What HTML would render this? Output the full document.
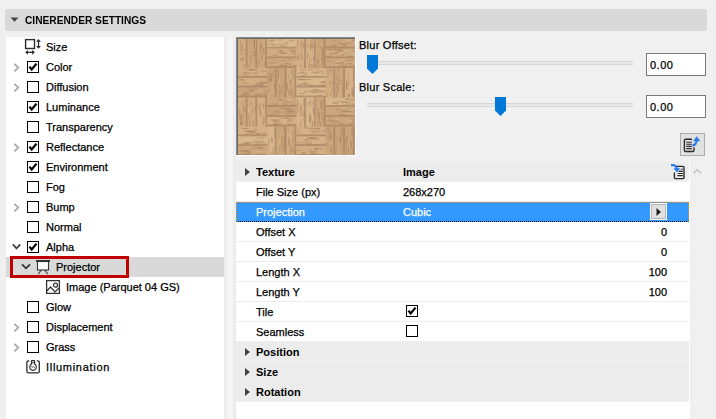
<!DOCTYPE html>
<html><head><meta charset="utf-8">
<style>
*{margin:0;padding:0;box-sizing:border-box}
html,body{width:716px;height:419px;overflow:hidden;background:#f0f0f0;font-family:"Liberation Sans",sans-serif;font-size:11px;color:#000;-webkit-text-stroke:0.25px currentColor}
.a{position:absolute}
#hdr{left:5px;top:9px;width:702px;height:22px;background:#d9d9d9;border-radius:3px}
#hdr .t{left:20px;top:0;line-height:22px;font-weight:bold;font-size:11px;letter-spacing:0;color:#000;-webkit-text-stroke:0;transform:scaleX(0.925);transform-origin:0 0}
#left{left:6px;top:37px;width:218px;height:382px;background:#fff}
.row{position:absolute;left:0;width:218px;height:20px;line-height:20px;white-space:nowrap}
.row .lbl{position:absolute;left:40px;top:0}
.cb{position:absolute;width:12px;height:12px;border:1px solid #000;background:#fff}
.chev{position:absolute}
#split1{left:224px;top:37px;width:12px;height:382px;background:#ececec}
#split2{left:227px;top:37px;width:6px;height:382px;background:#f5f5f5}
#tex{left:236px;top:37px;width:120px;height:119px}
.lab{white-space:nowrap;line-height:14px;letter-spacing:0.25px}
.track{height:4px;background:#e7eaea;border-top:1px solid #d6d6d6;border-bottom:1px solid #d6d6d6}
.inp{width:60px;height:23px;border:1px solid #7a7a7a;background:#fff;line-height:23px;padding-left:3px;letter-spacing:0.5px}
#table{left:236px;top:162px;width:454px;height:257px;background:#fff}
.tr{position:absolute;left:0;width:453px;height:20px;line-height:20px;border-bottom:1px solid #ededed;white-space:nowrap}
.tr.h{background:#ececec;font-weight:bold;-webkit-text-stroke:0;border-bottom:1px solid #f0f0f0}
.tr .c1{position:absolute;left:20px;top:0}
.tr .c2{position:absolute;left:167px;top:0}
.tr .num{position:absolute;right:22px;top:0}
.tri{position:absolute;left:9px;top:6px;width:0;height:0;border-left:5px solid #444;border-top:4px solid transparent;border-bottom:4px solid transparent}
</style></head><body>

<div id="hdr" class="a">
  <svg class="a" style="left:5px;top:8px" width="9" height="6"><path d="M0.5 0.5 H8.5 L4.5 4.8 Z" fill="#444"/></svg>
  <div class="a t">CINERENDER SETTINGS</div>
</div>

<div id="left" class="a">
  <!-- row 0 Size -->
  <div class="row" style="top:0">
    <svg class="a" style="left:18px;top:1px" width="18" height="18">
      <rect x="1.6" y="1.6" width="8.9" height="8.9" fill="none" stroke="#2b2b2b" stroke-width="1.4"/>
      <path d="M14.5 2.5 V9.2" stroke="#2b2b2b" stroke-width="1.3"/><path d="M12.1 3.7 L14.5 0.9 L16.9 3.7 Z M12.1 7.9 L14.5 10.7 L16.9 7.9 Z" fill="#2b2b2b"/>
      <path d="M2.5 14.3 H9.5" stroke="#2b2b2b" stroke-width="1.3"/><path d="M3.9 11.9 L1.1 14.3 L3.9 16.7 Z M8.1 11.9 L10.9 14.3 L8.1 16.7 Z" fill="#2b2b2b"/>
    </svg>
    <span class="lbl">Size</span>
  </div>
  <div class="row" style="top:20px"><svg class="chev" style="left:7px;top:6px" width="8" height="10"><path d="M1.4 0.8 L5.3 4.6 L1.4 8.4" fill="none" stroke="#a8a8a8" stroke-width="1.8"/></svg><div class="cb" style="left:21px;top:4px"></div><svg class="a" style="left:21px;top:4px" width="13" height="13"><path d="M2.5 5.6 L4.7 8.5 L9.5 2.6" fill="none" stroke="#000" stroke-width="2.2"/></svg><span class="lbl">Color</span></div>
  <div class="row" style="top:40px"><svg class="chev" style="left:7px;top:6px" width="8" height="10"><path d="M1.4 0.8 L5.3 4.6 L1.4 8.4" fill="none" stroke="#a8a8a8" stroke-width="1.8"/></svg><div class="cb" style="left:21px;top:4px"></div><span class="lbl">Diffusion</span></div>
  <div class="row" style="top:60px"><div class="cb" style="left:21px;top:4px"></div><svg class="a" style="left:21px;top:4px" width="13" height="13"><path d="M2.5 5.6 L4.7 8.5 L9.5 2.6" fill="none" stroke="#000" stroke-width="2.2"/></svg><span class="lbl">Luminance</span></div>
  <div class="row" style="top:80px"><div class="cb" style="left:21px;top:4px"></div><span class="lbl">Transparency</span></div>
  <div class="row" style="top:100px"><svg class="chev" style="left:7px;top:6px" width="8" height="10"><path d="M1.4 0.8 L5.3 4.6 L1.4 8.4" fill="none" stroke="#a8a8a8" stroke-width="1.8"/></svg><div class="cb" style="left:21px;top:4px"></div><svg class="a" style="left:21px;top:4px" width="13" height="13"><path d="M2.5 5.6 L4.7 8.5 L9.5 2.6" fill="none" stroke="#000" stroke-width="2.2"/></svg><span class="lbl">Reflectance</span></div>
  <div class="row" style="top:120px"><div class="cb" style="left:21px;top:4px"></div><svg class="a" style="left:21px;top:4px" width="13" height="13"><path d="M2.5 5.6 L4.7 8.5 L9.5 2.6" fill="none" stroke="#000" stroke-width="2.2"/></svg><span class="lbl">Environment</span></div>
  <div class="row" style="top:140px"><div class="cb" style="left:21px;top:4px"></div><span class="lbl">Fog</span></div>
  <div class="row" style="top:160px"><svg class="chev" style="left:7px;top:6px" width="8" height="10"><path d="M1.4 0.8 L5.3 4.6 L1.4 8.4" fill="none" stroke="#a8a8a8" stroke-width="1.8"/></svg><div class="cb" style="left:21px;top:4px"></div><span class="lbl">Bump</span></div>
  <div class="row" style="top:180px"><div class="cb" style="left:21px;top:4px"></div><span class="lbl">Normal</span></div>
  <div class="row" style="top:200px"><svg class="chev" style="left:6px;top:6px" width="10" height="8"><path d="M0.8 1.3 L4.5 5.3 L8.2 1.3" fill="none" stroke="#444" stroke-width="1.8"/></svg><div class="cb" style="left:21px;top:4px"></div><svg class="a" style="left:21px;top:4px" width="13" height="13"><path d="M2.5 5.6 L4.7 8.5 L9.5 2.6" fill="none" stroke="#000" stroke-width="2.2"/></svg><span class="lbl">Alpha</span></div>
  <!-- Projector selected -->
  <div class="row" style="top:220px;background:#d9d9d9">
    <div class="a" style="left:4px;top:-1px;width:119px;height:22px;border:3px solid #c00000"></div>
    <svg class="chev" style="left:15px;top:6px" width="11" height="8"><path d="M1 1.3 L5 5.3 L9 1.3" fill="none" stroke="#333" stroke-width="1.8"/></svg>
    <svg class="a" style="left:29px;top:2px" width="16" height="16">
      <rect x="2.5" y="2.5" width="11" height="8.5" fill="#fff" stroke="#333" stroke-width="1.1"/>
      <path d="M1 2 H15" stroke="#333" stroke-width="2"/>
      <path d="M6.3 11 L3.3 15 M9.7 11 L12.7 15" stroke="#333" stroke-width="1.1"/>
    </svg>
    <span class="lbl" style="left:50px">Projector</span>
  </div>
  <div class="row" style="top:240px">
    <svg class="a" style="left:39px;top:2px" width="16" height="16">
      <rect x="1.6" y="1.6" width="12.8" height="12.8" fill="none" stroke="#333" stroke-width="1.3"/>
      <circle cx="10.5" cy="6.2" r="2" fill="none" stroke="#333" stroke-width="1.2"/>
      <path d="M1.8 12 L5.5 8 L10 13 L14 9" fill="none" stroke="#333" stroke-width="1.2"/>
    </svg>
    <span class="lbl" style="left:60px">Image (Parquet 04 GS)</span>
  </div>
  <div class="row" style="top:260px"><div class="cb" style="left:21px;top:4px"></div><span class="lbl">Glow</span></div>
  <div class="row" style="top:280px"><svg class="chev" style="left:7px;top:6px" width="8" height="10"><path d="M1.4 0.8 L5.3 4.6 L1.4 8.4" fill="none" stroke="#a8a8a8" stroke-width="1.8"/></svg><div class="cb" style="left:21px;top:4px"></div><span class="lbl">Displacement</span></div>
  <div class="row" style="top:300px"><svg class="chev" style="left:7px;top:6px" width="8" height="10"><path d="M1.4 0.8 L5.3 4.6 L1.4 8.4" fill="none" stroke="#a8a8a8" stroke-width="1.8"/></svg><div class="cb" style="left:21px;top:4px"></div><span class="lbl">Grass</span></div>
  <div class="row" style="top:320px">
    <svg class="a" style="left:19px;top:2px" width="16" height="16">
      <path d="M4.3 1.9 H3.4 Q1.9 1.9 1.9 3.4 V12.4 Q1.9 13.9 3.4 13.9 H12.8 Q14.3 13.9 14.3 12.4 V3.4 Q14.3 1.9 12.8 1.9 H11.9" fill="none" stroke="#2b2b2b" stroke-width="1.3"/>
      <rect x="6.4" y="1.6" width="3.3" height="2.2" rx="0.4" fill="none" stroke="#2b2b2b" stroke-width="1.1"/>
      <path d="M6.5 3.9 V5.1 A3.3 3.3 0 1 0 9.6 5.1 V3.9" fill="none" stroke="#2b2b2b" stroke-width="1.15"/>
      <path d="M6.2 7.4 L7.3 8.4 L8.3 7.5 L9.8 8.6" fill="none" stroke="#2b2b2b" stroke-width="0.9"/>
    </svg>
    <span class="lbl" style="letter-spacing:0.7px">Illumination</span>
  </div>
</div>

<div id="split1" class="a"></div>
<div id="split2" class="a"></div>

<svg id="tex" class="a" width="120" height="119">
<defs><filter id="bl" x="0" y="0" width="1" height="1"><feGaussianBlur stdDeviation="0.45"/></filter></defs>
<rect x="0" y="0" width="120" height="119" fill="#cca77e"/>
<g filter="url(#bl)">
<rect x="2" y="2" width="9.9" height="29.4" fill="#d0ac82"/>
<rect x="11.8" y="2" width="9.9" height="29.4" fill="#cca77d"/>
<rect x="21.5" y="2" width="9.9" height="29.4" fill="#cca77d"/>
<rect x="31.2" y="2" width="29.4" height="9.9" fill="#d8b68b"/>
<rect x="31.2" y="11.8" width="29.4" height="9.9" fill="#d0ac82"/>
<rect x="31.2" y="21.5" width="29.4" height="9.9" fill="#cca77d"/>
<rect x="60.5" y="2" width="9.9" height="29.4" fill="#d4b086"/>
<rect x="70.2" y="2" width="9.9" height="29.4" fill="#d4b086"/>
<rect x="80" y="2" width="9.9" height="29.4" fill="#c9a47a"/>
<rect x="89.8" y="2" width="29.4" height="9.9" fill="#cca77d"/>
<rect x="89.8" y="11.8" width="29.4" height="9.9" fill="#d0ac82"/>
<rect x="89.8" y="21.5" width="29.4" height="9.9" fill="#cca77d"/>
<rect x="2" y="31.2" width="29.4" height="9.9" fill="#d0ac82"/>
<rect x="2" y="41" width="29.4" height="9.9" fill="#d0ac82"/>
<rect x="2" y="50.8" width="29.4" height="9.9" fill="#c9a47a"/>
<rect x="31.2" y="31.2" width="9.9" height="29.4" fill="#cca77d"/>
<rect x="41" y="31.2" width="9.9" height="29.4" fill="#c9a47a"/>
<rect x="50.8" y="31.2" width="9.9" height="29.4" fill="#d0ac82"/>
<rect x="60.5" y="31.2" width="29.4" height="9.9" fill="#d8b68b"/>
<rect x="60.5" y="41" width="29.4" height="9.9" fill="#d8b68b"/>
<rect x="60.5" y="50.8" width="29.4" height="9.9" fill="#d8b68b"/>
<rect x="89.8" y="31.2" width="9.9" height="29.4" fill="#d0ac82"/>
<rect x="99.5" y="31.2" width="9.9" height="29.4" fill="#cca77d"/>
<rect x="109.2" y="31.2" width="9.9" height="29.4" fill="#d4b086"/>
<rect x="2" y="60.5" width="9.9" height="29.4" fill="#d0ac82"/>
<rect x="11.8" y="60.5" width="9.9" height="29.4" fill="#d0ac82"/>
<rect x="21.5" y="60.5" width="9.9" height="29.4" fill="#d4b086"/>
<rect x="31.2" y="60.5" width="29.4" height="9.9" fill="#cca77d"/>
<rect x="31.2" y="70.2" width="29.4" height="9.9" fill="#c9a47a"/>
<rect x="31.2" y="80" width="29.4" height="9.9" fill="#d4b086"/>
<rect x="60.5" y="60.5" width="9.9" height="29.4" fill="#d8b68b"/>
<rect x="70.2" y="60.5" width="9.9" height="29.4" fill="#d8b68b"/>
<rect x="80" y="60.5" width="9.9" height="29.4" fill="#c9a47a"/>
<rect x="89.8" y="60.5" width="29.4" height="9.9" fill="#d8b68b"/>
<rect x="89.8" y="70.2" width="29.4" height="9.9" fill="#cca77d"/>
<rect x="89.8" y="80" width="29.4" height="9.9" fill="#cca77d"/>
<rect x="2" y="89.8" width="29.4" height="9.9" fill="#d4b086"/>
<rect x="2" y="99.5" width="29.4" height="9.9" fill="#d8b68b"/>
<rect x="2" y="109.2" width="29.4" height="9.9" fill="#cca77d"/>
<rect x="31.2" y="89.8" width="9.9" height="29.4" fill="#d8b68b"/>
<rect x="41" y="89.8" width="9.9" height="29.4" fill="#c9a47a"/>
<rect x="50.8" y="89.8" width="9.9" height="29.4" fill="#d0ac82"/>
<rect x="60.5" y="89.8" width="29.4" height="9.9" fill="#d0ac82"/>
<rect x="60.5" y="99.5" width="29.4" height="9.9" fill="#d4b086"/>
<rect x="60.5" y="109.2" width="29.4" height="9.9" fill="#d0ac82"/>
<rect x="89.8" y="89.8" width="9.9" height="29.4" fill="#c9a47a"/>
<rect x="99.5" y="89.8" width="9.9" height="29.4" fill="#c9a47a"/>
<rect x="109.2" y="89.8" width="9.9" height="29.4" fill="#c9a47a"/>
<path d="M10.6 2V31.2M20.3 2V31.2M30.1 2V31.2M31.2 10.6H60.5M31.2 20.3H60.5M31.2 30.1H60.5M69 2V31.2M78.8 2V31.2M88.5 2V31.2M89.8 10.6H119M89.8 20.3H119M89.8 30.1H119M2 39.8H31.2M2 49.5H31.2M2 59.3H31.2M39.8 31.2V60.5M49.5 31.2V60.5M59.3 31.2V60.5M60.5 39.8H89.8M60.5 49.5H89.8M60.5 59.3H89.8M98.3 31.2V60.5M108 31.2V60.5M117.8 31.2V60.5M10.6 60.5V89.8M20.3 60.5V89.8M30.1 60.5V89.8M31.2 69H60.5M31.2 78.8H60.5M31.2 88.5H60.5M69 60.5V89.8M78.8 60.5V89.8M88.5 60.5V89.8M89.8 69H119M89.8 78.8H119M89.8 88.5H119M2 98.3H31.2M2 108H31.2M2 117.8H31.2M39.8 89.8V119M49.5 89.8V119M59.3 89.8V119M60.5 98.3H89.8M60.5 108H89.8M60.5 117.8H89.8M98.3 89.8V119M108 89.8V119M117.8 89.8V119" stroke="#9c7a5e" stroke-width="1.8" opacity="0.6" fill="none"/>
<path d="M4.6 11.4v6.8M7.9 12.7v3.3M4.1 27.4v3.4M5.5 2.6v4.9M19.2 7.2v7.3M19.5 6.2v2.3M18.9 2.9v5.5M29.1 16.8v2.9M24.5 9.2v5.3M24.4 16.7v6.7M24.1 27.8v3.5M53 7.9h4.5M49.3 8.8h8.8M45.1 6.4h3.2M46.7 7.1h3.7M39 14.6h5.6M46.1 18.6h5M37.8 14.6h2.1M38.8 27.3h5.4M53.9 25.9h6.6M56.3 27.1h4.2M67.2 7.8v6.5M66.3 5.5v4M74.2 12.2v5.2M72.5 20.4v4.6M81.2 2.6v5.2M84.8 19.2v6.3M85.5 6.5v2.2M101.5 8.6h6.5M109.6 2.9h6.8M108.2 4.5h7.6M100.8 28h2.4M104.9 22.5h5.4M96.3 24.7h8.9M98.3 27.8h6.8M108.2 25.6h4.8M18 37.4h8M27.4 34.9h2.1M3 33.7h2.6M11.2 34.1h7.6M22.9 37.6h2.5M13.2 44.7h5.7M9.4 43.9h6.2M23.1 47.5h7M14.2 58.1h2M21.5 53.9h5.4M2.4 56.5h7.7M6.7 54.6h7.9M37.7 52.9v5M43.3 39v8.3M46.8 37.4v4.1M45.9 41.5v4.6M80.4 32.1h5.6M73.5 33.9h5.8M63.2 34.4h6.4M73.1 55.6h7.9M68.1 56.9h3.4M73.3 51.8h3.1M93.3 33.9v4.9M96.1 51.8v7.1M91.9 36.2v3.2M94.8 47.1v8.4M103.5 51.4v6.9M105 51.3v8.1M115.2 49.6v5.3M116.2 38.2v6M110.3 47.8v7.5M116.8 44.8v8.2M12.8 70.1v9M13.2 72v3.9M15.7 67.4v3M16.3 69.9v3.3M12.8 73v3.4M22.5 63.7v3.3M29.2 79.9v8.4M22.4 68.5v7.9M25 68.8v6.4M48 66h6M51.9 62.4h4.7M50.1 62.7h3.9M47.1 63h8.6M42.9 77.6h6M56.4 75.9h4.1M51.9 80.9h5.1M44.7 81.9h7.9M76.4 71.8v3.6M77.8 77.5v6M82.4 64.6v4.3M83 69.1v3.6M86.7 83.2v5.9M85.4 80.3v6.8M107.6 76.3h5M103.8 71.2h8M110.9 72.4h5.7M107.2 73.3h6.5M111 83.7h4.7M112.6 81.3h3.2M94.8 82.4h8.5M27.7 92.7h3.5M8 102.7h2.8M28.2 102.9h3.1M11.7 100.9h2.5M13.6 107.2h3.7M10.7 110.6h6.7M18.6 114.8h6.3M12.9 116.9h5.7M37 101.3v6.4M35.5 91.7v3M36.7 111.3v4.4M42.4 104.3v6.2M44.2 98.2v8M43.2 103.7v2.5M42.7 107.3v6M44.6 96.2v6M46.4 90.8v2.6M53.5 97.9v5.1M54.1 100.4v2.3M52.9 101.2v3.2M66.3 95.4h8.5M64.2 96.2h7.1M68.5 96.3h5.5M71.7 94.3h3.3M76.1 91.8h4.1M65.5 92.2h8.3M66.9 93.4h6.4M84.2 101.8h2.9M65.4 100.6h5.5M73.1 112.3h6.3M81.8 115.4h7.9M94.1 110.7v7.8M95 102.3v7.2M93.8 96v7.6M104.6 91.9v7.4M102.1 108.5v5.4M115.5 109.1v5.1M110.4 109.8v3.8M116.7 90.8v3.2M116 106.6v3.2" stroke="#e2c293" stroke-width="1" opacity="0.45" fill="none"/>
<path d="M7.3 15.9v7.9M5.5 22v2.5M5 7.2v8.1M4.6 10.7v7.7M12.9 27.6v2.2M17.9 4.8v7.2M13.8 4.1v3M16.3 12.7v3.7M25.2 5.7v8.5M23.5 15.7v8.7M43.8 9.3h6.8M35.8 7.9h7.5M42.3 7.4h6.4M48.3 5.9h3.5M35.4 18.5h6.2M41.6 13.5h5.4M34.6 22.4h4M49.3 26.1h2.8M42.5 23.6h7.7M43.7 28.1h6.8M51.7 22.3h6.1M39.4 25.6h3.2M66.8 19.4v2.2M61.8 3.5v6M61.7 20.3v3.1M64.8 25.9v5.4M63.1 16.5v3.8M66.4 6.7v7M76.9 26.8v4.5M73.1 26.4v4.8M82.5 28.1v2.2M81.3 28.1v3.2M82 7.5v2.3M86.6 16.8v8.6M94.9 9.4h6.9M95.9 4.1h8.5M102.1 6.5h6.9M93.5 12.7h6.8M99.2 13.9h3.1M115.6 13.7h3.4M94.3 16.7h2.3M114 28h5M19.6 38.8h4.6M24.1 34.3h7.1M12.8 32.6h3.3M23.8 45.7h7.5M2.8 43.1h2.8M6.8 46h3.3M4.8 46.1h7.3M5.8 56.6h8.8M38 55.9v4.6M36.1 36.9v5M34.6 31.3v6.4M34.9 35.2v6.5M41.9 41.4v3.7M43.5 49.4v8.2M48.1 46.2v3.9M52.7 52v6.9M57.6 55.3v5.2M54.7 49.5v6.3M56.4 49.8v7M55.3 53.3v7.2M71.7 32.6h6.4M64.1 33.3h5.4M77.9 35.9h4.9M83.9 34.5h3.9M85.6 36.5h2.8M84.6 45.4h4.7M83.7 53.6h6M67.9 54.5h7.8M96 31.6v6M92.1 31.3v8.8M91.7 35.7v5.6M91 55.7v4.6M92.1 33.7v5.9M105.8 42.2v6.6M102.6 37.8v6.8M112.3 35.8v4.5M116.2 51.3v8.1M112.2 42.4v6.3M6 64.7v4.3M27.4 79.7v8.4M47.4 65.5h7.9M46.7 65.4h7.6M47.8 65.1h7.2M51.5 74.8h8.7M40.9 75.8h6.3M55.5 75.7h5M37.3 75.9h6.3M48.4 76.5h5.8M35.1 77h5.4M37.9 84.7h5.7M61.3 67.3v8.9M67.9 73v4.2M68.2 76.8v5.7M61.8 62.7v8.2M77.1 64.4v4.5M74.3 62.4v5.2M74.7 80v4.6M77 70.5v4.9M85.3 84.2v2.2M85.7 75.6v6.9M113.1 63.3h5.9M111.6 62.3h4M107 68.1h5.3M105.5 65.3h8.8M99.5 64.6h7.3M114.8 62.2h4.2M109.7 62.2h3.5M96.9 66.1h2M115.6 75.1h3.4M105.7 74.9h8.4M99.2 72.2h6.8M100 73.4h2.9M94.9 83.9h7.9M115.2 82.3h3.8M12.2 95.6h5.3M20.5 105.8h4.7M20.9 100.9h7.8M17.9 104.2h3.8M12.1 115.8h2.9M22.3 110.7h4.4M6.8 114.4h8.4M13.1 111.3h6.5M39 105.4v8.3M32.7 115.8v3.2M32.5 108.2v8.9M48.7 103.6v6.6M53.9 112.6v5M56.6 92.3v3.4M57.3 95v3M57.2 97.7v4.7M64.2 105.6h6.2M61 105.6h2.6M69.5 104.6h6.4M70.3 100.5h7.8M83.2 111.8h4.4M73.7 114.9h4.8M78.4 112h5M92 95.9v6.2M90.8 105v5.7M95.6 108v4.3M95.7 111.9v5.6M93.6 98.7v3.7M105.6 95.4v8.6M100.8 107.2v6.8M105.5 107.5v6M104.4 92.8v6M107.1 109v2.7M107.2 112.5v6.5M114.1 114.4v3.2M115.1 104.3v6.1" stroke="#b8926e" stroke-width="1.4" opacity="0.55" fill="none"/>
<path d="M4.5 3.4v3.1M8.8 12v2.7M5.9 5.5v8.8M8.2 27.2v3.2M6.9 20.6v2.5M4.9 20.3v3.3M18.4 2.5v7.5M16.6 2.2v2.3M19.1 11v4.5M18.5 3v8.6M14.9 18v8.4M19 16.3v4.2M18.3 14v5M25.2 6.4v4.6M23.1 23.6v5.7M28.8 24.8v3.3M25.9 16.4v5.5M27.8 11.3v6.1M24.7 6.7v8M27.7 10.6v3.9M25.8 19.7v4.5M50.2 7.2h2.2M32.3 7.2h5.3M34.8 3.2h4.2M32.2 4.1h5.3M41.9 2.8h3.9M53.1 3.6h4.6M40.5 14.6h2.9M45.4 16.5h5.3M43.8 15.2h3.4M52.8 13.2h6.6M55.3 14.8h5.2M43.8 16h7M55.7 14.7h3M56.5 17.1h3.7M43.7 14.2h2.3M50.4 26.6h2.2M52.6 27h2.9M43.5 28.5h7.3M56.8 28.5h3.7M32.5 26.1h7.1M68.1 28.2v3M62.3 18v4.9M65.6 3.1v2.8M67.4 5.5v5M65.5 14.9v8.6M64.9 5.5v3.6M75 2.9v8M71.8 15.9v5.8M76.3 4.2v8.4M73.7 21v4.5M75.4 27.2v4M78 7.6v3.3M71.3 6.9v3.4M77.6 19.4v4.4M73.1 26.5v4.7M74.3 7v6.6M86.8 14.3v5.9M86.5 21.7v6.7M87 11v7.3M81.9 22.6v4.3M85.7 19.9v3.3M85.8 9.1v5.2M82.4 23.1v2.6M102.8 7.3h7.5M115.6 3.4h3.1M106.2 7.9h5.1M109.9 5.7h5.7M104.3 9.7h3M96.7 8.2h4.8M107.2 9.5h3.9M91.6 9h7.4M97.3 12.6h8.6M91 12.7h5M104.5 18.1h4.2M102.8 13.5h4.3M109.1 16.3h2.2M111.4 19.3h5.1M90.2 19.2h5.7M93.5 16.9h7.4M98.5 15.5h5.1M102.2 13.7h5.4M95.4 25h3.9M99.1 26.2h7.3M106 28.2h4.8M102.6 28.1h2.3M108.6 23h8.3M110.8 26.6h4.6M105.2 25.9h3.3M90.5 24.5h4.2M12.9 33.1h8.7M7.4 37.4h4M16.8 36.3h5.4M11 32.9h7.5M7.4 35.7h6.7M8.5 38.9h2.7M20.1 46.3h7.1M23.9 45.2h7.3M18.9 47.7h8.5M24.1 46.6h5.3M6.1 43.1h2.6M18.4 48.5h8.8M3.7 42.5h3.4M27.9 57.7h3.3M5.5 58.2h2M7.1 56.8h4.4M18.9 57.8h7.4M12.7 52.3h8.6M7.8 54.6h8.9M13.9 53.3h2.9M5.7 57.2h7.7M27.1 55.5h4.1M33.4 52.3v2.1M38.7 47v7.9M32.2 35.5v7.4M32.2 52.7v3.2M34.2 36.3v7.8M34.6 41.6v3.3M37.3 33.3v6.8M35.5 39.6v5.2M32.6 40.8v6.3M42.4 34.7v6.6M45.7 38.7v2.7M43.9 55v5.5M47.9 56.6v3M42.2 31.6v3.5M45.7 42.8v2.7M45.9 49.2v6.5M43.3 47.5v2.7M54.1 42v5.2M51.6 46.1v6M56.7 34.3v8.2M53.9 52.6v5.4M52.4 37.8v2.2M55.5 54.9v4.5M56.1 31.9v4.9M55.2 42.9v6M51.8 50v4.1M80.3 32.9h3.8M64.6 35.3h3.5M65.9 38.6h2.6M75.5 35.2h8.4M68.2 37.9h2.8M61.8 36.1h8.8M67.3 46.8h4.9M62.2 42.5h7M62.1 47.8h4.1M81.3 48.4h8.3M71.4 42.5h3.6M68.1 45.7h2.8M85.3 48.3h4.4M63.5 47.1h5.8M74.7 48.7h5.1M86 45.6h3.7M69 48.2h7.7M61.9 42.8h8.6M84.6 44.9h5.2M77 52.7h5.2M63.1 56.5h6.2M80.7 58.2h5.1M77.4 53.3h7M78.3 54.8h7.6M75.1 55.3h3.4M76.4 55.2h6.2M74.3 53.6h4.1M84.5 54.8h5.2M94.3 43.9v5.3M95 55.4v3.4M94.2 31.3v5M96.8 43.6v4M95.9 49.6v6.3M100.4 54.5v6M100.8 40.2v2.7M100.9 37v2M102.4 50.4v4.7M106.9 54.7v5.8M103.1 43.1v4.9M106.4 50v5.1M101.6 45.3v7.9M101 47.1v4.5M102.3 31.4v3M116.3 50.3v8.2M112.6 57.2v3.3M112.3 56.7v3.8M113.9 56.9v2.1M110.8 44.7v7.4M110.6 48.4v4.2M110.6 44v8.2M4.9 84.9v4M5.2 85.3v2.6M4.3 78.4v5.2M8.8 69.1v6.8M8.9 62v3.6M4.6 82.1v5.5M6.3 82.7v6M7.4 76.6v4.8M3.7 72v8.2M5.3 76.3v6.1M5.9 79.8v2.3M8.1 84.3v2.5M7.2 68v6.6M16.5 70.9v5.3M14.9 77v2.8M12.6 78.4v4.2M13.6 84.4v5.3M15.2 65.6v3.4M17.4 83.5v6.3M13.3 75.1v2.7M15 82.7v2.1M19.4 69.2v4.2M24.5 67v2.5M27.7 67.2v3.2M22.8 65.1v7M25 75.5v4M24.1 72.5v2.8M24 70.2v8.7M28.1 80v6.1M27.8 68.3v3M26.4 66.5v2M41.3 62.9h6.5M34.9 67.1h7.3M42.8 62.8h4.1M31.6 68.2h2.1M47.1 67.2h4.4M55.2 67.2h3.3M48 63.2h4.2M38 74.1h5.4M48.8 72.1h7M44.5 71.4h6.6M51.1 71.5h3.6M50.2 74.7h7.4M50 73.3h8.7M42.8 86.7h3.3M51.1 84.4h4.4M51.5 83h6.1M36.6 87.7h5.8M37.3 87.6h6.7M44.3 81.3h8.4M36.9 83.7h5.1M37.5 86.3h4M51.3 87.2h9M48.8 81.1h8.1M35.1 82.9h8.5M67.9 61.6v8.3M66.4 81.8v2M64.5 84.4v5.4M68.2 75.1v4.1M64.3 74.2v5.2M63 71.6v2.7M66 74.2v4.6M61.5 63.7v4.8M66 69.4v3.6M64.7 66v8M77.9 71.9v6.7M71.4 65v3.6M74.1 64.8v4.5M73.6 76.4v8.9M74.6 77.8v4.6M74 82.4v3.5M76 84.6v4.4M76.5 84.4v5M85.5 63.5v9M83.5 75.3v4.6M87 80.4v4.3M84.3 85.9v2.6M83.1 78.8v7.4M82.2 70.8v8.9M85 63.3v7.3M85.6 83.9v2.8M98.2 66.4h3.9M96.6 65.9h2.5M115.7 67.2h3.3M105.2 65.1h6M108.9 62.2h4.4M109.4 67h7.3M105 74.1h4.1M106.8 74.5h6.4M107.7 72.9h4.7M111.2 74.5h4.3M112 71.5h3M102.8 77.7h7.3M94.8 85h9M115.4 85.4h3.6M93.1 83h6.2M102.8 86.3h5.5M113 81.1h2.4M115.6 83.1h3.4M112 87h5.8M90.4 84h3.7M92.7 81.1h3.4M17.6 92.4h3.4M13.2 94.3h8.3M8.9 96.9h4.4M20.3 97.3h3.3M8.6 91.7h4.3M15.7 95.3h4M5 91.5h5.1M8.7 94.2h7.4M26.8 96.5h4.4M14.4 97h8.2M8.8 94.3h7.3M20.6 96.7h5M21.3 105.3h6M24.7 103.8h2.9M7.6 106h5M25.8 106.1h4.5M8.8 105.7h8.8M18.6 106.1h2.8M5.4 106.7h8.8M9 113.6h3.1M5 114.3h8.2M19.2 110.2h5.6M3.7 113.5h4.3M13.6 116.5h2.1M5.9 116.2h8.2M22.7 111.3h6.1M38.9 95.2v6.9M33 101.3v6.9M37 114.3v3M36.8 101v5.2M37.4 110.3v7.1M35.5 100.1v5.3M35.3 115v4M38.6 91.6v6.4M45.2 98.5v5M46.2 101.1v7.9M43.6 108.9v4.5M48.6 104.6v3.3M47.9 90.1v4.2M48.6 98.6v7.4M47.4 108.4v5.6M56.8 108.2v7.3M52.6 99.4v8.7M52.7 92.5v2.1M56.6 101.6v6.5M55.1 109.4v7.3M53.6 101.4v8.9M58.1 113v6M75.6 94.7h7.5M67.6 90.9h3.9M61.8 95h2.1M80.2 91.6h3.4M72.7 91.8h4.5M77 91.7h6.9M85.8 94.2h3.9M71.9 101.8h7.5M72.3 101.6h6.2M78.9 102.2h4.2M74.5 101h7.4M69.1 102.7h2.7M86.2 106.9h3.5M67.3 102.8h4.1M69.8 106.7h6.3M76.8 116.6h3.4M73.8 114.8h7.7M78.1 111.4h3.9M73.2 112.8h2.2M73.9 116.7h4.6M77.3 112.5h3.4M60.9 113.5h2.9M65.6 116.8h3.1M65.5 115.6h4.2M92.8 90.8v5.3M95 95.5v8.1M94.2 94.9v7.8M90.8 90.6v5.3M94.6 113.9v3.4M94.8 110v5M100.7 99.8v2.6M104.5 101v5.6M105.7 91.4v2.8M104.1 97.2v7.4M105.2 90.5v3M106.8 94.5v3.9M115.3 104v8.3M110.5 108.1v8.8M116.1 113.2v2.6M115.9 90.8v8.1M112.5 110.4v5.7M111.4 99.3v3.6M116.6 90.7v4.6M110.3 99.5v8.8" stroke="#a07c5e" stroke-width="1" opacity="0.5" fill="none"/>
</g>
<path d="M1.5 119V1.5H120" fill="none" stroke="#686c70" stroke-width="1"/>
<path d="M0.5 119V0.5H120" fill="none" stroke="#86898c" stroke-width="1"/>
<path d="M0 118.5H119.5V0" fill="none" stroke="#ffffff" stroke-width="1"/>
</svg>

<div class="a lab" style="left:359px;top:38px">Blur Offset:</div>
<div class="a track" style="left:367px;top:61px;width:266px"></div>
<svg class="a" style="left:367px;top:55px" width="12" height="20"><path d="M0 0 H11 V13.5 L5.5 19 L0 13.5 Z" fill="#0078d7"/></svg>
<div class="a inp" style="left:646px;top:53px">0.00</div>

<div class="a lab" style="left:359px;top:80px">Blur Scale:</div>
<div class="a track" style="left:367px;top:103px;width:266px"></div>
<svg class="a" style="left:495px;top:97px" width="12" height="20"><path d="M0 0 H11 V13.5 L5.5 19 L0 13.5 Z" fill="#0078d7"/></svg>
<div class="a inp" style="left:646px;top:95px">0.00</div>

<div class="a" style="left:680px;top:133px;width:25px;height:23px;background:#e1e1e1;border:1px solid #adadad">
  <svg class="a" style="left:-1px;top:-1px" width="25" height="23">
    <path d="M12 6.2 H5.6 Q4.4 6.2 4.4 7.4 V17.3 Q4.4 18.5 5.6 18.5 H12.8 Q14 18.5 14 17.3 V14.3" fill="none" stroke="#2b2b2b" stroke-width="1.4"/>
    <path d="M6.2 9.2 H11.8 M6.2 11.3 H11.8 M6.2 13.4 H11.8 M6.2 15.6 H11.8" stroke="#2b2b2b" stroke-width="1.1"/>
    <path d="M12.3 12.3 C15.6 12.3 16.7 10.6 16.7 6.6" fill="none" stroke="#2b7de9" stroke-width="2.2"/>
    <path d="M13 8.2 L16.7 3.2 L20.4 8.2 Z" fill="#2b7de9"/>
  </svg>
</div>

<div id="table" class="a">
  <div class="tr h" style="top:0"><div class="tri"></div><span class="c1">Texture</span><span class="c2">Image</span>
    <svg class="a" style="left:429px;top:0px" width="24" height="20">
      <path d="M11 4.4 H17.8 Q19 4.4 19 5.6 V15.4 Q19 16.6 17.8 16.6 H10.6 Q9.4 16.6 9.4 15.4 V10.5" fill="none" stroke="#2b2b2b" stroke-width="1.4"/>
      <path d="M15.8 7.2 H17.8 M13.6 9.4 H17.8 M12.8 11.5 H17.8 M12.3 13.6 H17.8" stroke="#2b2b2b" stroke-width="1.1"/>
      <path d="M6 3.1 H7.8 C10.4 3.1 11.9 4.4 11.9 8" fill="none" stroke="#2b7de9" stroke-width="2.2"/>
      <path d="M8.4 6.2 L11.9 10.6 L15.4 6.2 Z" fill="#2b7de9"/>
    </svg>
  </div>
  <div class="tr" style="top:20px"><span class="c1">File Size (px)</span><span class="c2">268x270</span></div>
  <div class="tr" style="top:40px;background:#3399ff;color:#fff;border-bottom:none">
    <span class="c1">Projection</span><span class="c2">Cubic</span>
    <div class="a" style="left:0;top:0;width:453px;height:20px;border-top:1px dotted #e88a1a;border-left:1px dotted #e88a1a;border-right:1px dotted #e88a1a;border-bottom:1px dotted #000"></div>
    <div class="a" style="left:414px;top:1px;width:17px;height:17px;background:#e1e1e1;border:1px solid #fff;outline:1px solid #b5b5b5;outline-offset:-2px">
      <svg class="a" style="left:4px;top:3px" width="8" height="10"><path d="M1.5 1 L6 5 L1.5 9 Z" fill="#222"/></svg>
    </div>
  </div>
  <div class="tr" style="top:60px"><span class="c1">Offset X</span><span class="num">0</span></div>
  <div class="tr" style="top:80px"><span class="c1">Offset Y</span><span class="num">0</span></div>
  <div class="tr" style="top:100px"><span class="c1">Length X</span><span class="num">100</span></div>
  <div class="tr" style="top:120px"><span class="c1">Length Y</span><span class="num">100</span></div>
  <div class="tr" style="top:140px"><span class="c1">Tile</span>
    <div class="cb" style="left:170px;top:3px"></div><svg class="a" style="left:170px;top:3px" width="13" height="13"><path d="M2.5 5.6 L4.7 8.5 L9.5 2.6" fill="none" stroke="#000" stroke-width="2.2"/></svg></div>
  <div class="tr" style="top:160px"><span class="c1">Seamless</span><div class="cb" style="left:170px;top:3px"></div></div>
  <div class="tr h" style="top:180px"><div class="tri"></div><span class="c1">Position</span></div>
  <div class="tr h" style="top:200px"><div class="tri"></div><span class="c1">Size</span></div>
  <div class="tr h" style="top:220px"><div class="tri"></div><span class="c1">Rotation</span></div>
</div>

<svg class="a" style="left:692px;top:167px" width="12" height="9"><path d="M1.5 6.5 L5.3 2.5 L9.1 6.5" fill="none" stroke="#c3c3c3" stroke-width="1.4"/></svg>

</body></html>
